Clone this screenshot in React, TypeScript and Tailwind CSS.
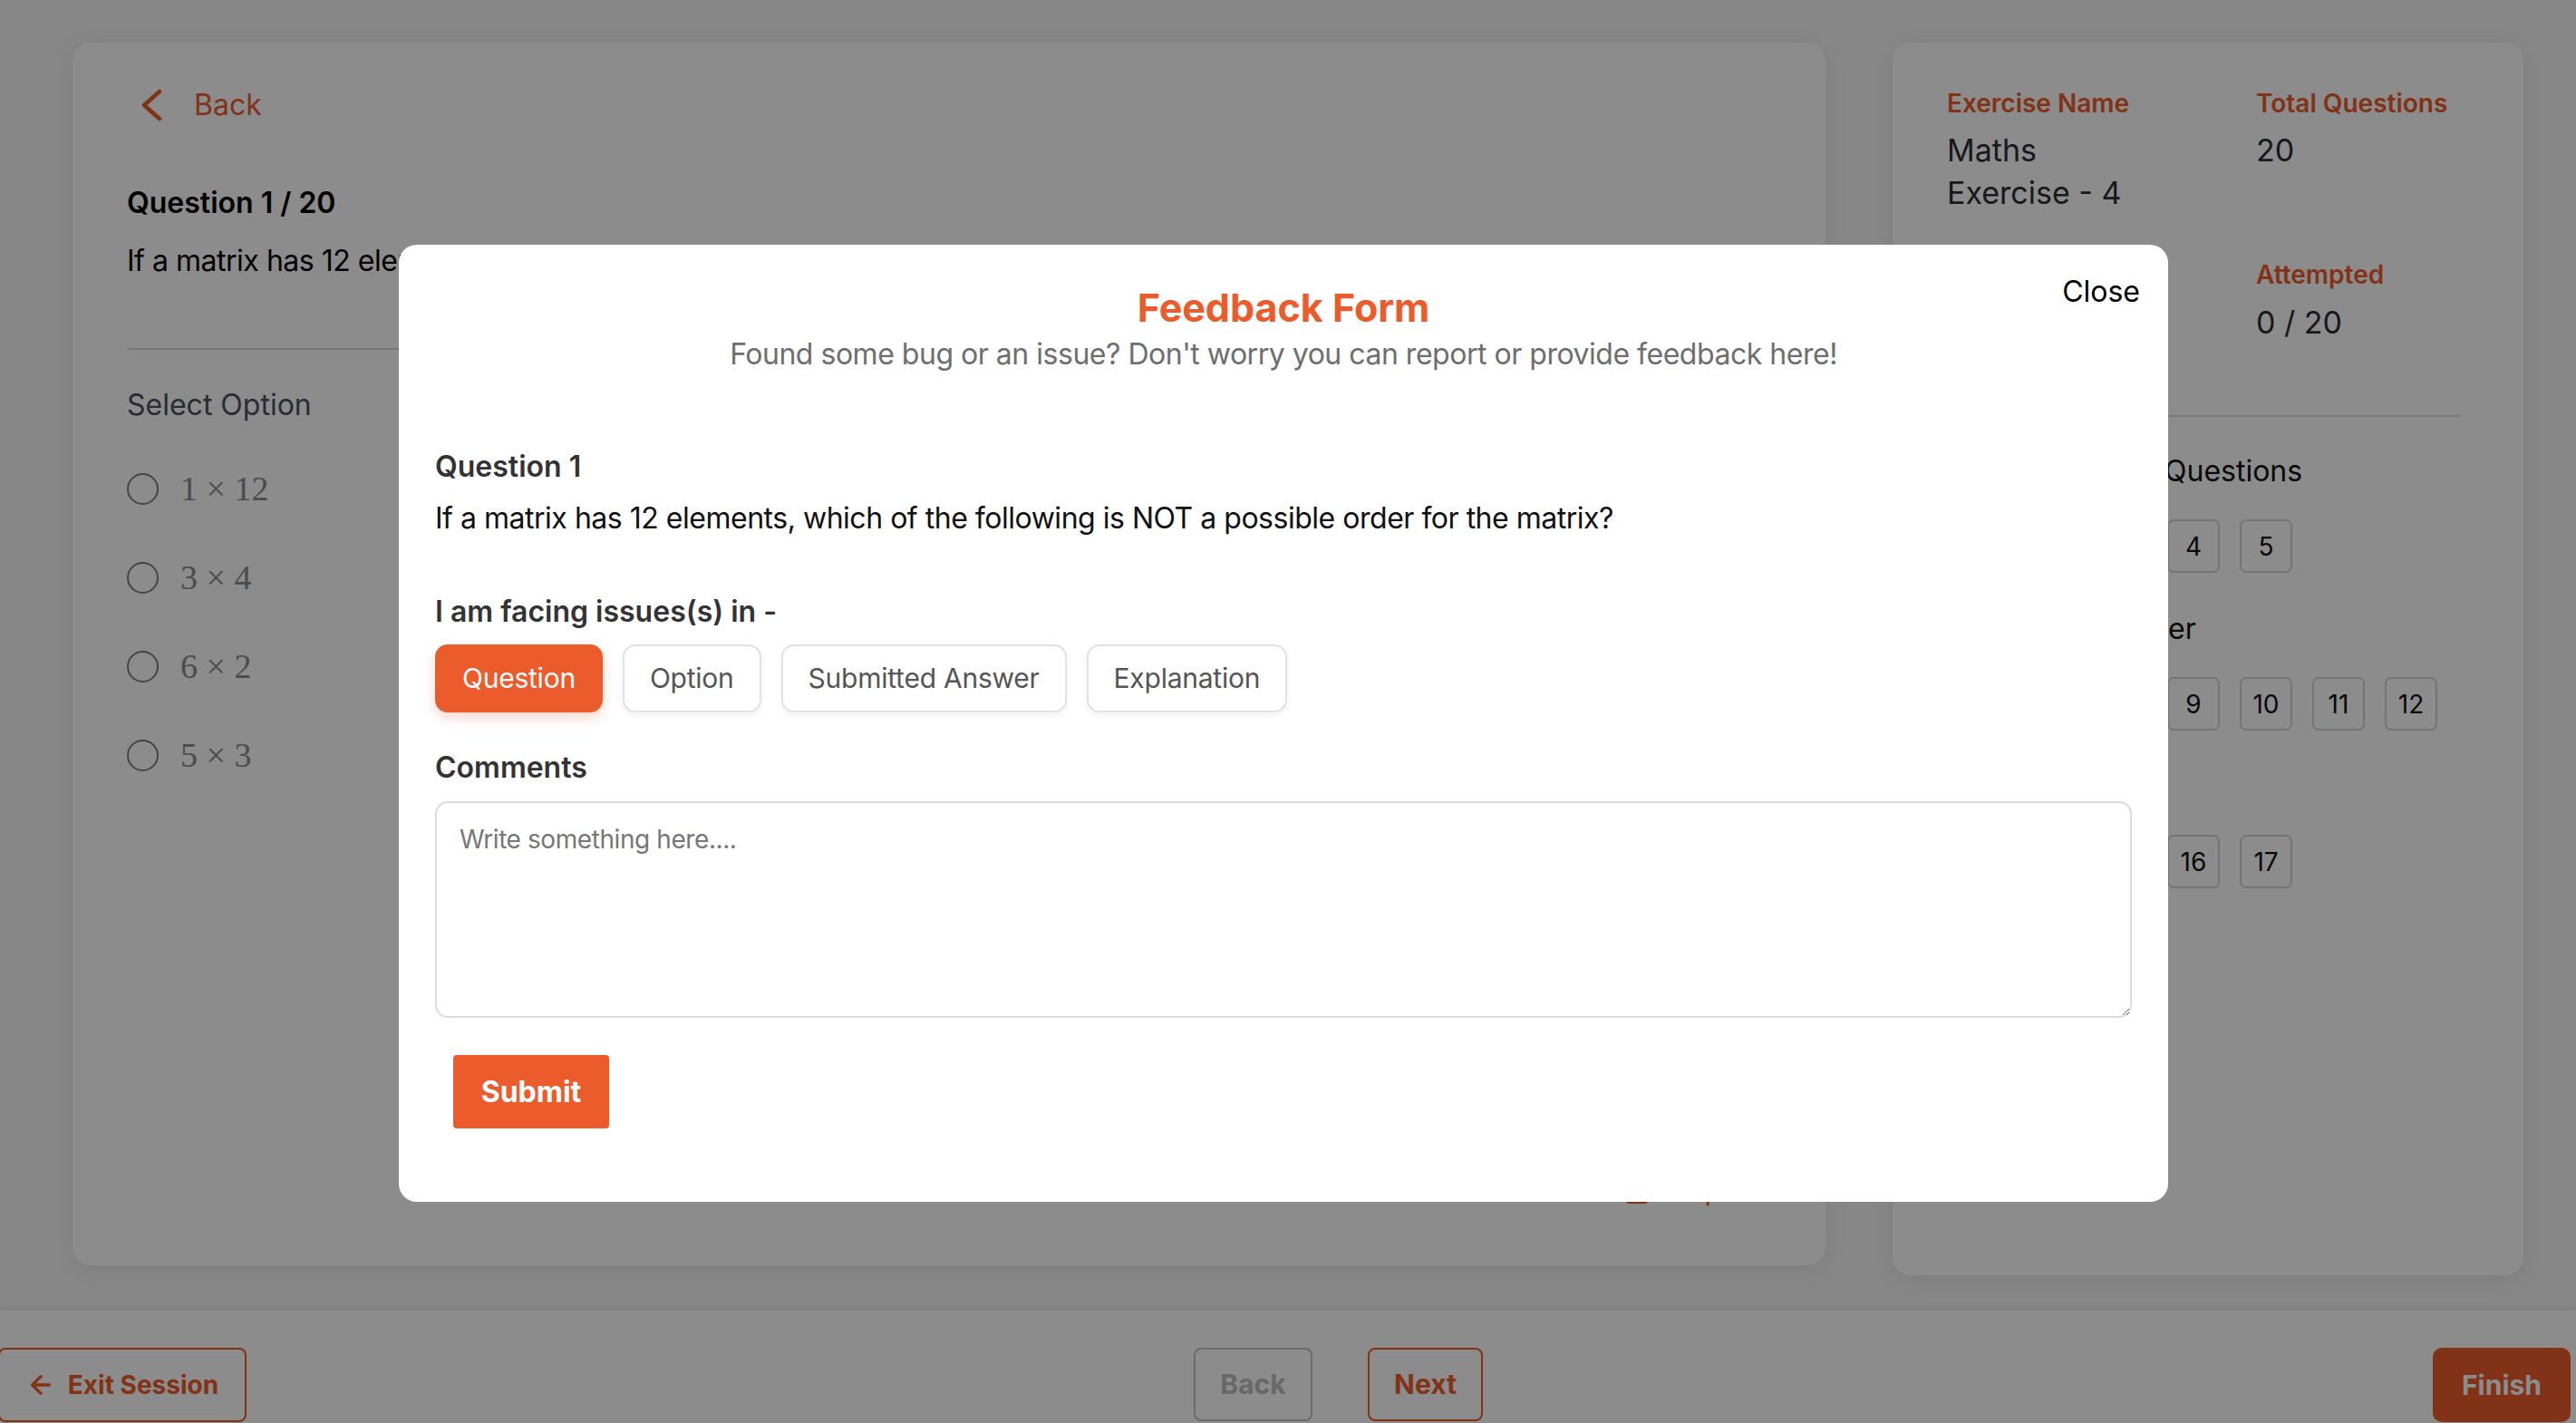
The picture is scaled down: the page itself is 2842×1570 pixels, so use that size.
import React from "react";
import { ArrowLeft } from "lucide-react";

function NumBox({ n }: { n: number }) {
  return (
    <div className="w-[58px] h-[59px] rounded-[7px] border-2 border-[#d6d6d6] flex items-center justify-center text-[28px] text-[#111]">
      {n}
    </div>
  );
}

export default function App() {
  const options = ["1 × 12", "3 × 4", "6 × 2", "5 × 3"];
  return (
    <div className="relative w-full h-[1570px] overflow-hidden bg-[#f6f6f6] [font-family:Inter,'Liberation_Sans',sans-serif] flex flex-col">
      {/* main */}
      <div className="flex items-start gap-[74px] pl-[80px] pr-[58px] pt-[47px] h-[1446px]">
        {/* left card */}
        <div className="w-[1934px] h-[1349px] bg-white rounded-[20px] shadow-[0_4px_24px_rgba(0,0,0,0.08)] flex flex-col pt-[53px] pl-[60px] pr-[60px] pb-[67px]">
          <div className="flex items-center gap-[34px] pl-[14px] h-[32px] text-[32px] leading-none text-[#EC5B2B]">
            <svg width="26" height="36" viewBox="0 0 26 36" fill="none">
              <polyline points="22,3 5,18 22,33" stroke="#EC5B2B" strokeWidth="4.5" strokeLinecap="round" strokeLinejoin="round" />
            </svg>
            <span>Back</span>
          </div>
          <div className="mt-[76px] text-[32px] leading-none font-semibold text-black">Question 1 / 20</div>
          <div className="mt-[32px] text-[32px] leading-none text-black tracking-[-0.015em]">
            If a matrix has 12 elements, which of the following is NOT a possible order for the matrix?
          </div>
          <div className="mt-[80px] h-[2px] bg-[#dadada]" />
          <div className="mt-[45px] text-[32px] leading-none text-[#4b5060]">Select Option</div>
          <div className="mt-[56px] flex flex-col gap-[58px]">
            {options.map((o) => (
              <div key={o} className="flex items-center h-[40px] gap-[24px]">
                <div className="w-[35px] h-[35px] rounded-full border-2 border-[#7e7e7e]" />
                <span className="text-[38px] leading-none text-[#8a8a8a] [font-family:'Liberation_Serif',serif]">{o}</span>
              </div>
            ))}
          </div>
          <div className="mt-auto flex items-center justify-end gap-[20px] pr-[12px] h-[32px]">
            <svg width="30" height="30" viewBox="0 0 30 30" fill="none">
              <rect x="1.5" y="1.5" width="27" height="27" rx="6" stroke="#EC5B2B" strokeWidth="3" />
            </svg>
            <span className="text-[32px] leading-none text-[#EC5B2B]">Report</span>
          </div>
        </div>

        {/* right card */}
        <div className="w-[696px] h-[1360px] bg-white rounded-[20px] shadow-[0_4px_24px_rgba(0,0,0,0.08)] pt-[53px] pl-[60px] pr-[69px] flex flex-col">
          <div className="grid grid-cols-[341px_1fr] gap-y-[53px]">
            <div>
              <div className="text-[28px] leading-none font-semibold text-[#EC5B2B]">Exercise Name</div>
              <div className="mt-[14px] text-[34px] leading-[47px] text-[#2b2f3a] w-[215px]">Maths Exercise - 4</div>
            </div>
            <div>
              <div className="text-[28px] leading-none font-semibold text-[#EC5B2B]">Total Questions</div>
              <div className="mt-[14px] text-[34px] leading-[47px] text-[#2b2f3a]">20</div>
            </div>
            <div>
              <div className="text-[28px] leading-none font-semibold text-[#EC5B2B]">Time Taken</div>
              <div className="mt-[15px] text-[34px] leading-[47px] text-[#2b2f3a]">00:00</div>
            </div>
            <div>
              <div className="text-[28px] leading-none font-semibold text-[#EC5B2B]">Attempted</div>
              <div className="mt-[15px] text-[34px] leading-[47px] text-[#2b2f3a]">0 / 20</div>
            </div>
          </div>
          <div className="mt-[79px] h-[2px] bg-[#dadada]" />
          <div className="mt-[44px] text-[32px] leading-none text-[#111] whitespace-nowrap">
            <span className="inline-block w-[240px]">Unattempted</span>Questions
          </div>
          <div className="mt-[37px] flex gap-[22px] pl-[3px]">
            {[1, 2, 3, 4, 5].map((n) => (
              <NumBox key={n} n={n} />
            ))}
          </div>
          <div className="mt-[46px] text-[32px] leading-none text-[#111] whitespace-nowrap">
            <span className="inline-block w-[244px]">Review Lat</span>er
          </div>
          <div className="mt-[37px] flex gap-[22px] pl-[3px]">
            {[6, 7, 8, 9, 10, 11, 12].map((n) => (
              <NumBox key={n} n={n} />
            ))}
          </div>
          <div className="mt-[46px] text-[32px] leading-none text-[#111]">Attempted</div>
          <div className="mt-[37px] flex gap-[22px] pl-[3px]">
            {[13, 14, 15, 16, 17].map((n) => (
              <NumBox key={n} n={n} />
            ))}
          </div>
        </div>
      </div>

      {/* footer */}
      <div className="h-[124px] bg-white shadow-[0_-3px_12px_rgba(0,0,0,0.07)] flex items-start justify-between pt-[41px] pr-[6px]">
        <button className="h-[82px] w-[274px] -ml-[2px] rounded-[8px] border-2 border-[#EC5B2B] flex items-center justify-center gap-[14px] text-[28px] font-bold text-[#EC5B2B]">
          <ArrowLeft size={32} strokeWidth={2.5} />
          Exit Session
        </button>
        <div className="flex gap-[61px] ml-[1045px]">
          <button className="h-[81px] w-[131px] rounded-[8px] border-2 border-[#c4c4c4] text-[30px] font-bold text-[#bdbdbd]">Back</button>
          <button className="h-[81px] w-[127px] rounded-[8px] border-2 border-[#EC5B2B] text-[30px] font-bold text-[#EC5B2B]">Next</button>
        </div>
        <button className="ml-auto h-[82px] w-[152px] rounded-[10px] bg-[#EC5B2B] text-[30px] font-bold text-white">Finish</button>
      </div>

      {/* overlay */}
      <div className="absolute inset-0 bg-black/45" />

      {/* modal */}
      <div className="absolute left-[440px] top-[270px] w-[1952px] h-[1056px] rounded-[20px] bg-white px-[40px] pt-[48px]">
        <button className="absolute right-[31px] top-[36px] text-[32px] leading-none text-black">Close</button>
        <h2 className="text-center text-[43px] leading-none font-bold text-[#EC5B2B]">Feedback Form</h2>
        <p className="mt-[14px] text-center text-[32px] leading-none text-[#6e6e6e] tracking-[-0.015em]">
          Found some bug or an issue? Don't worry you can report or provide feedback here!
        </p>
        <div className="mt-[92px] text-[32px] leading-none font-semibold text-[#333]">Question 1</div>
        <p className="mt-[25px] text-[32px] leading-none text-[#111] tracking-[-0.015em]">
          If a matrix has 12 elements, which of the following is NOT a possible order for the matrix?
        </p>
        <div className="mt-[71px] text-[32px] leading-none font-semibold text-[#333]">I am facing issues(s) in -</div>
        <div className="mt-[20px] flex gap-[22px] tracking-[-0.015em]">
          <button className="h-[75px] px-[30px] rounded-[14px] bg-[#EC5B2B] text-white text-[30px] shadow-[0_6px_14px_rgba(236,91,43,0.25)]">
            Question
          </button>
          {["Option", "Submitted Answer", "Explanation"].map((t) => (
            <button
              key={t}
              className="h-[75px] px-[28px] rounded-[14px] border-2 border-[#e2e2e2] bg-white text-[#555] text-[30px] shadow-[0_3px_8px_rgba(0,0,0,0.06)]"
            >
              {t}
            </button>
          ))}
        </div>
        <div className="mt-[45px] text-[32px] leading-none font-semibold text-[#333]">Comments</div>
        <textarea
          placeholder="Write something here...."
          className="mt-[21px] block w-full h-[239px] rounded-[14px] border-2 border-[#dcdcdc] px-[25px] pt-[26px] text-[28px] leading-none tracking-[-0.015em] placeholder:text-[#777] outline-none"
        />
        <button className="mt-[41px] ml-[20px] w-[172px] h-[81px] rounded-[4px] bg-[#EC5B2B] text-white text-[32px] font-bold">
          Submit
        </button>
      </div>
    </div>
  );
}
